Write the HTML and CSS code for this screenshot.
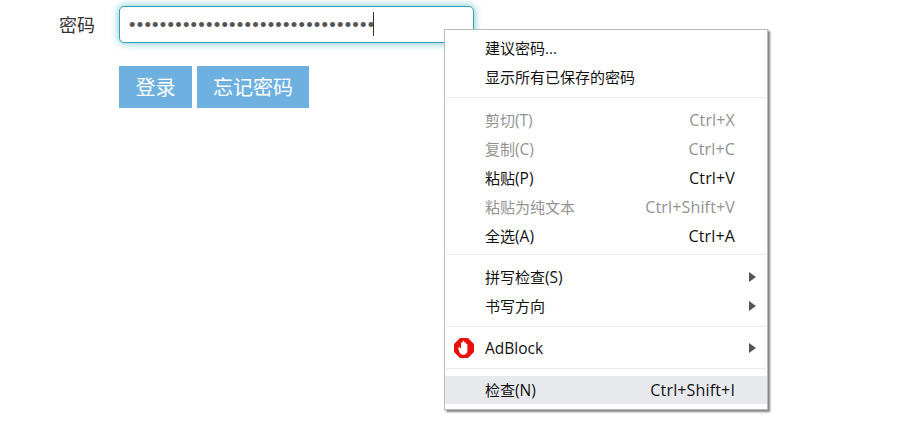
FILE: index.html
```html
<!DOCTYPE html>
<html lang="zh-CN">
<head>
    <meta charset="UTF-8">
    <meta name="viewport" content="width=device-width, initial-scale=1.0">
    <title>登录</title>
    <link rel="stylesheet" href="styles.css">
</head>
<body>
    <form class="login-form">
        <div class="form-row">
            <label class="form-label" for="password">密码</label>
            <div class="input-wrap">
                <input class="form-input" id="password" type="password" value="01234567890123456789012345678901" readonly>
                <span class="caret"></span>
            </div>
        </div>
        <div class="form-actions">
            <button class="btn" type="button">登录</button>
            <button class="btn" type="button">忘记密码</button>
        </div>
    </form>

    <div class="context-menu">
        <div class="menu-section section-first">
            <div class="menu-item"><span>建议密码...</span></div>
            <div class="menu-item"><span>显示所有已保存的密码</span></div>
        </div>
        <div class="menu-section section-edit">
            <div class="menu-item disabled"><span>剪切<b class="latin">(T)</b></span><span class="shortcut">Ctrl+X</span></div>
            <div class="menu-item disabled"><span>复制<b class="latin">(C)</b></span><span class="shortcut">Ctrl+C</span></div>
            <div class="menu-item"><span>粘贴<b class="latin">(P)</b></span><span class="shortcut">Ctrl+V</span></div>
            <div class="menu-item disabled"><span>粘贴为纯文本</span><span class="shortcut">Ctrl+Shift+V</span></div>
            <div class="menu-item"><span>全选<b class="latin">(A)</b></span><span class="shortcut">Ctrl+A</span></div>
        </div>
        <div class="menu-section section-writing">
            <div class="menu-item"><span>拼写检查<b class="latin">(S)</b></span><i class="arrow"></i></div>
            <div class="menu-item"><span>书写方向</span><i class="arrow"></i></div>
        </div>
        <div class="menu-section section-ext">
            <div class="menu-item">
                <svg class="menu-icon" viewBox="0 0 20 20" width="20" height="20">
                    <path d="M6 0h8l6 6v8l-6 6H6l-6-6V6z" fill="#e8100e"/>
                    <path d="M4.300 10.600c-.6-1 .7-2 1.500-1.100l1.200 1.300V5.200c0-1.200 1.500-1.200 1.600 0V3.700c0-1.200 1.700-1.200 1.700 0v1.500c.1-1.200 1.600-1.200 1.600 0v1.300c.1-1 1.500-1 1.500.2v5.800c0 2.500-1.500 4.200-3.900 4.200-2 0-3-.8-3.900-2.300z" fill="#fff"/>
                </svg>
                <span class="latin">AdBlock</span><i class="arrow"></i>
            </div>
        </div>
        <div class="menu-section section-last">
            <div class="menu-item active"><span>检查<b class="latin">(N)</b></span><span class="shortcut">Ctrl+Shift+I</span></div>
        </div>
    </div>
</body>
</html>
```

FILE: styles.css
```css
body {
    margin: 0;
    background-color: white;
    font-family: "Open Sans", "Noto Sans CJK SC", sans-serif;
    height: 433px;
    overflow: hidden;
}
.login-form {
    padding: 6px 0 0 59px;
}
.form-row {
    display: flex;
    align-items: center;
}
.form-label {
    width: 60px;
    padding-bottom: 2px;
    font-size: 18px;
    color: #333;
}
.input-wrap {
    position: relative;
    width: 355px;
    height: 37px;
}
.form-input {
    box-sizing: border-box;
    width: 100%;
    height: 100%;
    padding: 0 9px;
    border: 1px solid #31a2b8;
    border-radius: 5px;
    box-shadow: 0 0 9px rgba(49, 162, 184, 0.7);
    color: #555;
    font-family: "Liberation Sans", sans-serif;
    font-size: 18.5px;
    letter-spacing: 1.225px;
    outline: none;
}
.caret {
    position: absolute;
    left: 254px;
    top: 6px;
    width: 1px;
    height: 24px;
    background-color: #333;
}
.form-actions {
    display: flex;
    gap: 5px;
    margin: 23px 0 0 60px;
}
.btn {
    min-width: 73px;
    height: 42px;
    padding: 0 16px 2px;
    border: none;
    background-color: #6eb1e0;
    color: white;
    font-family: inherit;
    font-size: 20px;
}
.context-menu {
    position: absolute;
    left: 444px;
    top: 29px;
    width: 322px;
    border: 1px solid #bbb;
    background-color: white;
    box-shadow: 2px 2px 2px rgba(0, 0, 0, 0.5);
    font-size: 15px;
    color: #111;
}
.menu-section {
    margin: 0 1px;
    border-bottom: 1px solid #e9e9e9;
    padding-bottom: 5px;
}
.section-first {
    padding-top: 4px;
}
.section-edit {
    padding-top: 8px;
    padding-bottom: 3px;
}
.section-writing {
    padding-top: 8px;
}
.section-ext {
    padding-top: 7px;
}
.section-last {
    margin: 0;
    border-bottom: none;
    padding-top: 7px;
}
.menu-item {
    position: relative;
    display: flex;
    justify-content: space-between;
    align-items: center;
    box-sizing: border-box;
    height: 29px;
    padding: 0 31px 2px 39px;
}
.section-last .menu-item {
    height: 28px;
    padding: 0 32px 0 40px;
}
.latin {
    font-weight: normal;
    font-size: 15.5px;
}
.shortcut {
    font-size: 16px;
    letter-spacing: 0.15px;
}
.disabled {
    color: #929292;
}
.active {
    background-color: #e8e9ec;
}
.menu-icon {
    position: absolute;
    left: 8px;
    top: 4px;
}
.arrow {
    position: absolute;
    right: 10px;
    top: 9px;
    border-left: 7px solid #555;
    border-top: 5px solid transparent;
    border-bottom: 5px solid transparent;
}
```
